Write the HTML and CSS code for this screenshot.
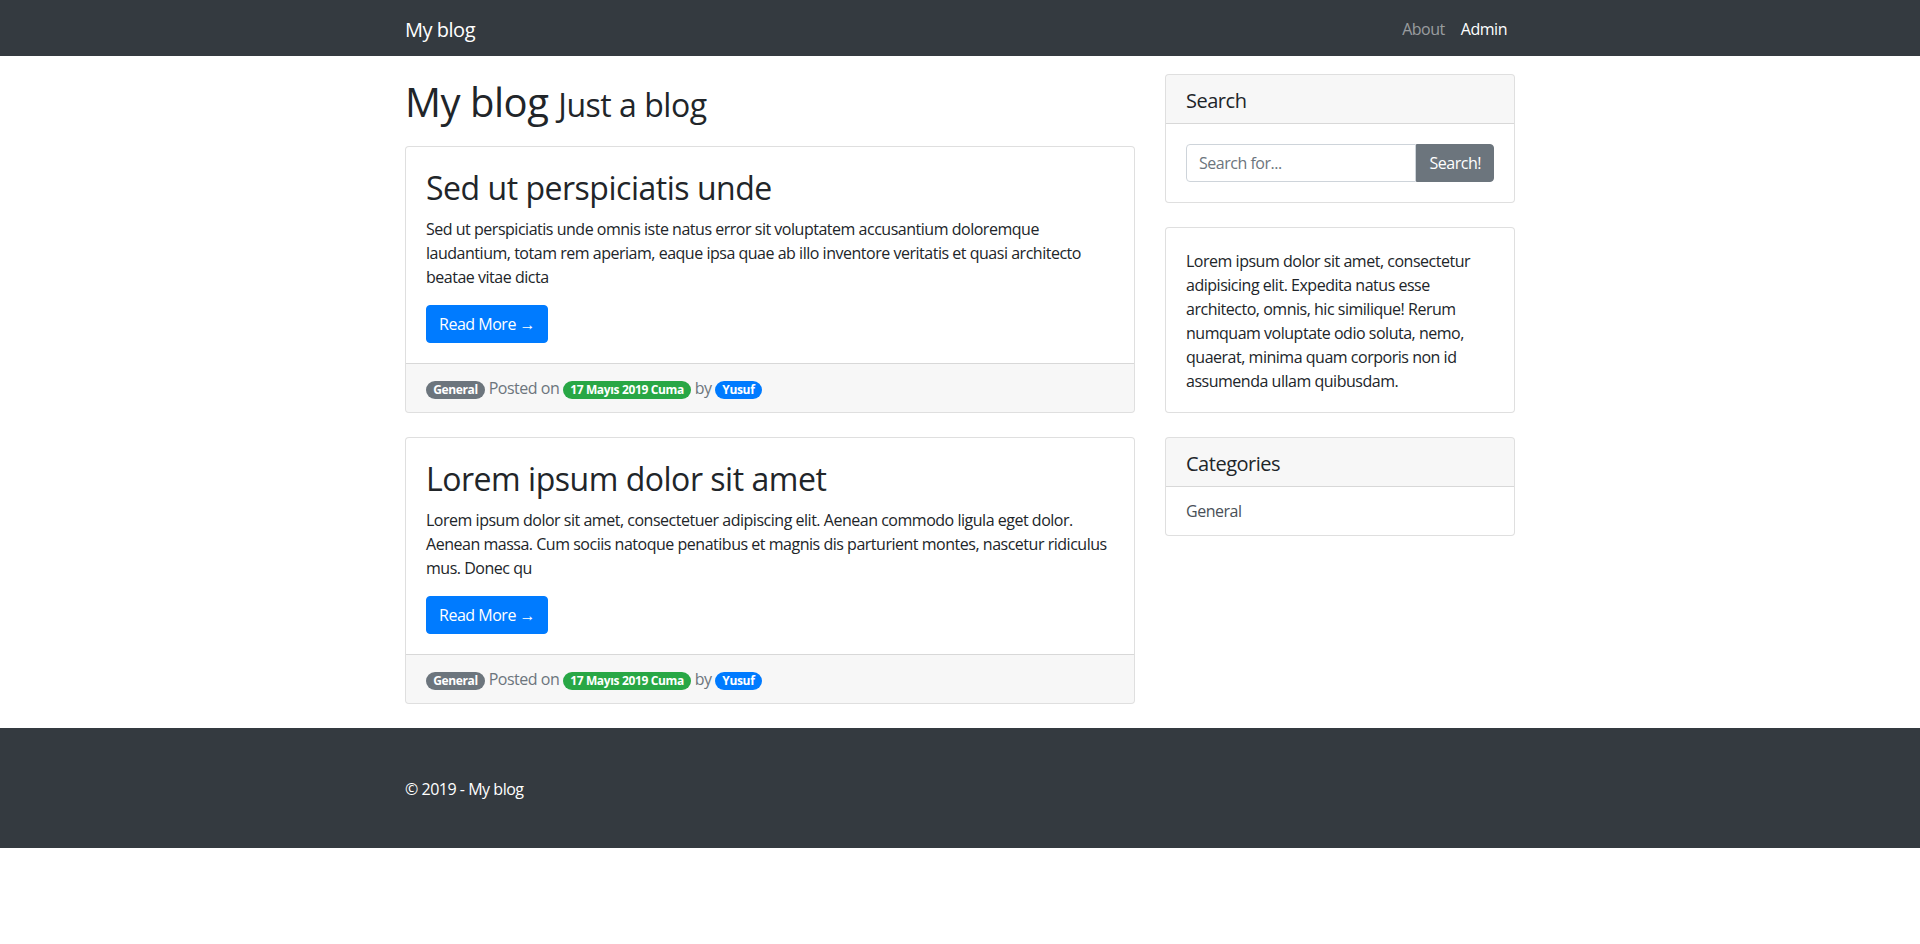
FILE: index.html
```html
<!DOCTYPE html>
<html lang="tr">
<head>
<meta charset="utf-8">
<title>My blog</title>
<link rel="stylesheet" href="styles.css">
</head>
<body>
<nav class="navbar">
  <div class="container nav-inner">
    <a class="brand" href="#">My blog</a>
    <ul class="nav-links">
      <li><a class="nav-link" href="#">About</a></li>
      <li><a class="nav-link active" href="#">Admin</a></li>
    </ul>
  </div>
</nav>

<div class="container">
  <div class="row">
    <div class="col-main">
      <h1 class="page-title">My blog <small>Just a blog</small></h1>

      <div class="card post">
        <div class="card-body">
          <h2 class="card-title">Sed ut perspiciatis unde</h2>
          <p class="card-text">Sed ut perspiciatis unde omnis iste natus error sit voluptatem accusantium doloremque laudantium, totam rem aperiam, eaque ipsa quae ab illo inventore veritatis et quasi architecto beatae vitae dicta</p>
          <a href="#" class="btn btn-primary">Read More &rarr;</a>
        </div>
        <div class="card-footer">
          <span class="badge badge-secondary">General</span> Posted on <span class="badge badge-success">17 Mayıs 2019 Cuma</span> by <span class="badge badge-primary">Yusuf</span>
        </div>
      </div>

      <div class="card post">
        <div class="card-body">
          <h2 class="card-title">Lorem ipsum dolor sit amet</h2>
          <p class="card-text">Lorem ipsum dolor sit amet, consectetuer adipiscing elit. Aenean commodo ligula eget dolor. Aenean massa. Cum sociis natoque penatibus et magnis dis parturient montes, nascetur ridiculus mus. Donec qu</p>
          <a href="#" class="btn btn-primary">Read More &rarr;</a>
        </div>
        <div class="card-footer">
          <span class="badge badge-secondary">General</span> Posted on <span class="badge badge-success">17 Mayıs 2019 Cuma</span> by <span class="badge badge-primary">Yusuf</span>
        </div>
      </div>
    </div>

    <div class="col-side">
      <div class="card widget first">
        <h5 class="card-header">Search</h5>
        <div class="card-body">
          <div class="input-group">
            <input type="text" class="form-control" placeholder="Search for...">
            <button class="btn btn-secondary" type="button">Search!</button>
          </div>
        </div>
      </div>

      <div class="card widget">
        <div class="card-body widget-text">
          Lorem ipsum dolor sit amet, consectetur adipisicing elit. Expedita natus esse architecto, omnis, hic similique! Rerum numquam voluptate odio soluta, nemo, quaerat, minima quam corporis non id assumenda ullam quibusdam.
        </div>
      </div>

      <div class="card widget">
        <h5 class="card-header">Categories</h5>
        <div class="list-group">
          <a href="#" class="list-group-item">General</a>
        </div>
      </div>
    </div>
  </div>
</div>

<footer class="site-footer">
  <div class="container">
    <p class="copyright">&copy; 2019 - My blog</p>
  </div>
</footer>
</body>
</html>
```

FILE: styles.css
```css
*, *::before, *::after { box-sizing: border-box; }

html, body {
  margin: 0;
  padding: 0;
}

body {
  font-family: "Open Sans", "Noto Sans", sans-serif;
  font-size: 16px;
  line-height: 24px;
  color: #212529;
  background: #fff;
  letter-spacing: -0.03em;
}

a { text-decoration: none; }

.container {
  width: 1140px;
  margin: 0 auto;
  padding: 0 15px;
}

/* Navbar */
.navbar {
  background: #343a40;
  padding: 8px 16px;
}

.nav-inner {
  display: flex;
  align-items: center;
  justify-content: space-between;
}

.brand {
  color: #fff;
  font-size: 20px;
  line-height: 30px;
  padding: 7px 0 3px;
}

.nav-links {
  display: flex;
  list-style: none;
  margin: 0;
  padding: 0;
}

.nav-link {
  display: block;
  padding: 9px 8px 7px;
  color: rgba(255, 255, 255, .5);
}

.nav-link.active { color: #fff; }

/* Grid */
.row {
  display: flex;
  margin: 0 -15px;
}

.col-main {
  flex: 0 0 66.6667%;
  max-width: 66.6667%;
  padding: 0 15px;
}

.col-side {
  flex: 0 0 33.3333%;
  max-width: 33.3333%;
  padding: 0 15px;
}

/* Heading */
.page-title {
  font-size: 40px;
  line-height: 48px;
  font-weight: 400;
  margin: 22px 0 20px;
}

.page-title small {
  font-size: 32px;
  line-height: 1;
  font-weight: 400;
}

/* Cards */
.card {
  border: 1px solid rgba(0, 0, 0, .125);
  border-radius: 4px;
  background: #fff;
  overflow: hidden;
}

.post { margin-bottom: 24px; }

.widget { margin-bottom: 24px; }
.widget.first { margin-top: 18px; }

.card-body { padding: 20px; }

.widget-text { padding: 21px 20px 19px; }

.card-title {
  font-size: 32px;
  line-height: 38px;
  font-weight: 400;
  margin: 0 0 10px;
  padding-top: 2px;
}

.card-text { margin: 0 0 16px; }

.card-header {
  margin: 0;
  padding: 14px 20px 10px;
  font-size: 20px;
  line-height: 24px;
  font-weight: 400;
  background: rgba(0, 0, 0, .03);
  border-bottom: 1px solid rgba(0, 0, 0, .125);
}

.card-footer {
  padding: 12px 20px;
  background: rgba(0, 0, 0, .03);
  border-top: 1px solid rgba(0, 0, 0, .125);
  color: #6c757d;
}

/* Buttons */
.btn {
  display: inline-block;
  font-family: inherit;
  font-size: 16px;
  line-height: 24px;
  letter-spacing: inherit;
  padding: 6px 12px;
  border: 1px solid transparent;
  border-radius: 4px;
  cursor: pointer;
}

.btn-primary {
  color: #fff;
  background: #007bff;
  border-color: #007bff;
}

.btn-secondary {
  color: #fff;
  background: #6c757d;
  border-color: #6c757d;
}

/* Badges */
.badge {
  display: inline-block;
  font-size: 12px;
  font-weight: 700;
  line-height: 1;
  padding: 3px 7.2px;
  border-radius: 160px;
  color: #fff;
  vertical-align: baseline;
  letter-spacing: -0.03em;
}

.badge-secondary { background: #6c757d; }
.badge-success { background: #28a745; }
.badge-primary { background: #007bff; }

/* Search */
.input-group {
  display: flex;
}

.form-control {
  flex: 1 1 auto;
  min-width: 0;
  height: 38px;
  padding: 6px 12px;
  font-family: inherit;
  font-size: 16px;
  line-height: 24px;
  letter-spacing: inherit;
  color: #495057;
  border: 1px solid #ced4da;
  border-radius: 4px 0 0 4px;
  outline: none;
}

.form-control::placeholder { color: #6c757d; }

.input-group .btn {
  border-radius: 0 4px 4px 0;
  height: 38px;
}

/* List group */
.list-group-item {
  display: block;
  padding: 12px 20px;
  color: #495057;
}

/* Footer */
.site-footer {
  background: #343a40;
  padding: 49px 0 47px;
}

.copyright {
  margin: 0;
  color: #fff;
}
```
